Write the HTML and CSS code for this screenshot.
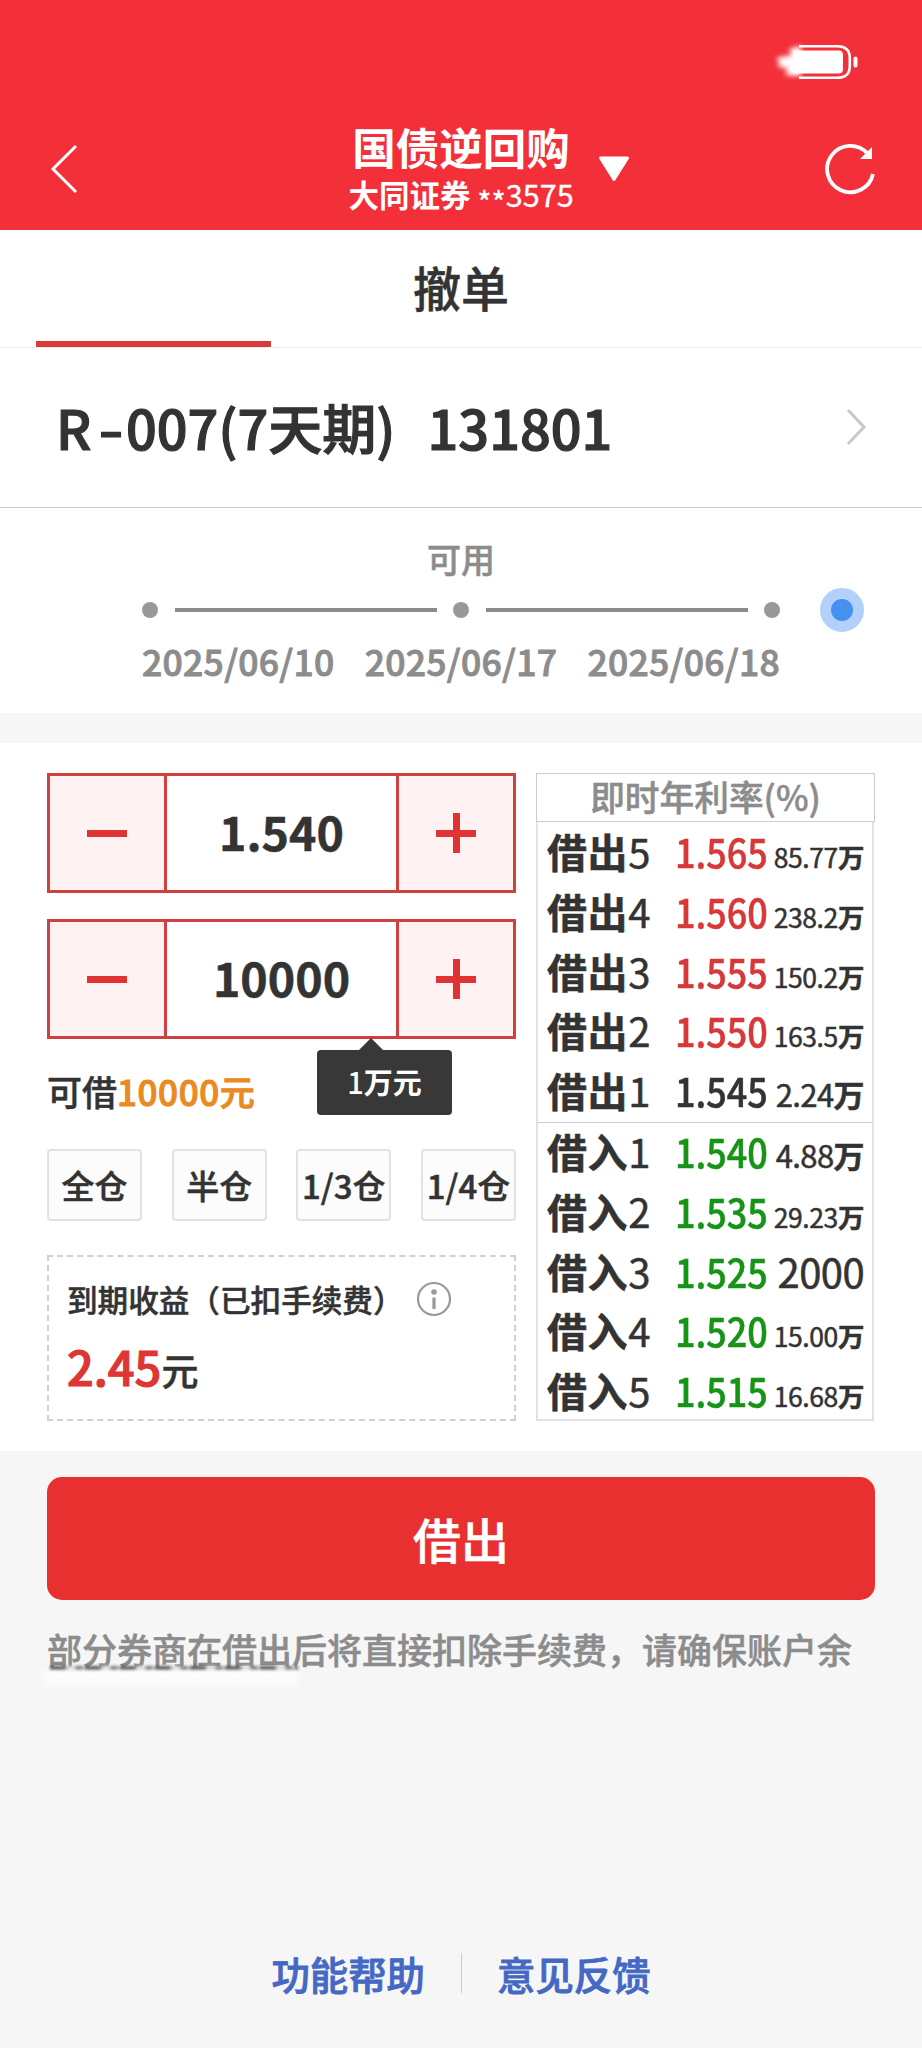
FILE: index.html
```html
<!DOCTYPE html>
<html lang="zh-CN">
<head>
    <meta charset="UTF-8">
    <meta name="viewport" content="width=device-width, initial-scale=1.0">
    <title>国债逆回购</title>
    <link rel="stylesheet" href="styles.css">
</head>
<body>

    <header class="header">
        <div class="status-bar">
            <svg class="battery" width="96" height="40" viewBox="0 0 96 40">
                <defs>
                    <filter id="soft" x="-40%" y="-40%" width="180%" height="180%"><feGaussianBlur stdDeviation="2.5"/></filter>
                </defs>
                <path d="M38 5 L26 8 L29 14 L13 17 L17 22 L14 25 L25 28 L22 34 L38 35 Z" fill="#fff" filter="url(#soft)"/>
                <path d="M36 5.200 H74 Q86.800 5.200 86.800 17 V25 Q86.800 36.800 74 36.800 H36" fill="none" stroke="#fff" stroke-width="2.600"/>
                <path d="M30 9.500 H76 Q80 9.500 80 14 V28 Q80 32.500 76 32.500 H30 Z" fill="#fff"/>
                <rect x="90.500" y="15.500" width="4" height="11" rx="2" fill="#fff"/>
            </svg>
        </div>
        <div class="nav">
            <svg class="back" width="30" height="50" viewBox="0 0 30 50">
                <path d="M27 2 L4 25 L27 48" fill="none" stroke="#fff" stroke-width="3"/>
            </svg>
            <div class="nav-title">
                <h1>国债逆回购</h1>
                <p>大同证券 <span class="account"><sub>**</sub>3575</span></p>
            </div>
            <svg class="dropdown" width="32" height="26" viewBox="0 0 32 26">
                <path d="M2.500 2 H29.500 L16 23.500 Z" fill="#fff" stroke="#fff" stroke-width="3" stroke-linejoin="round"/>
            </svg>
            <svg class="refresh" width="54" height="54" viewBox="0 0 54 54">
                <path d="M50 32 A23.200 23.200 0 1 1 44.500 11.500" fill="none" stroke="#fff" stroke-width="3.800"/>
                <path d="M49 5 V17 H37 Z" fill="#fff"/>
            </svg>
        </div>
    </header>

    <div class="tabs">
        <div class="tab active"></div>
        <div class="tab">撤单</div>
        <div class="tab"></div>
    </div>

    <div class="product">
        <div class="product-name"><span class="letter">R</span><span class="dash">-</span><span>007(7天期)</span><span class="code">131801</span></div>
        <svg width="22" height="38" viewBox="0 0 22 38">
            <path d="M2 2 L18 19 L2 36" fill="none" stroke="#c8c8c8" stroke-width="3"/>
        </svg>
    </div>

    <div class="timeline">
        <div class="timeline-label">可用</div>
        <div class="timeline-track">
            <i class="dot"></i><i class="line"></i><i class="dot"></i><i class="line"></i><i class="dot"></i>
            <i class="service"></i>
        </div>
        <div class="timeline-dates">
            <span>2025/06/10</span>
            <span>2025/06/17</span>
            <span>2025/06/18</span>
        </div>
    </div>

    <div class="trade">
        <div class="trade-form">
            <div class="stepper">
                <button type="button"><i class="minus"></i></button>
                <div class="stepper-value">1.540</div>
                <button type="button"><i class="plus"></i></button>
            </div>
            <div class="stepper">
                <button type="button"><i class="minus"></i></button>
                <div class="stepper-value">10000</div>
                <button type="button"><i class="plus"></i></button>
                <div class="tooltip"><span>1</span>万元</div>
            </div>
            <div class="available">可借<span>10000元</span></div>
            <div class="positions">
                <button type="button">全仓</button>
                <button type="button">半仓</button>
                <button type="button">1/3仓</button>
                <button type="button">1/4仓</button>
            </div>
            <div class="income">
                <div class="income-title">
                    <span>到期收益（已扣手续费）</span>
                    <svg width="36" height="36" viewBox="0 0 36 36">
                        <circle cx="18" cy="18" r="16" fill="none" stroke="#999" stroke-width="2.200"/>
                        <circle cx="18" cy="11" r="2.800" fill="#999"/>
                        <rect x="16.400" y="16.500" width="3.200" height="11.500" fill="#999"/>
                    </svg>
                </div>
                <div class="income-value"><span>2.45</span>元</div>
            </div>
        </div>

        <div class="quotes">
            <div class="quotes-title">即时年利率(%)</div>
            <div class="quotes-body">
                <!-- 借出 -->
                <div class="quotes-group">
                    <div class="quote"><b>借出</b><em>5</em><span class="rate up">1.565</span><span class="vol small">85.77<b>万</b></span></div>
                    <div class="quote"><b>借出</b><em>4</em><span class="rate up">1.560</span><span class="vol small">238.2<b>万</b></span></div>
                    <div class="quote"><b>借出</b><em>3</em><span class="rate up">1.555</span><span class="vol small">150.2<b>万</b></span></div>
                    <div class="quote"><b>借出</b><em>2</em><span class="rate up">1.550</span><span class="vol small">163.5<b>万</b></span></div>
                    <div class="quote"><b>借出</b><em>1</em><span class="rate">1.545</span><span class="vol medium">2.24<b>万</b></span></div>
                </div>
                <!-- 借入 -->
                <div class="quotes-group">
                    <div class="quote"><b>借入</b><em>1</em><span class="rate down">1.540</span><span class="vol medium">4.88<b>万</b></span></div>
                    <div class="quote"><b>借入</b><em>2</em><span class="rate down">1.535</span><span class="vol small">29.23<b>万</b></span></div>
                    <div class="quote"><b>借入</b><em>3</em><span class="rate down">1.525</span><span class="vol">2000</span></div>
                    <div class="quote"><b>借入</b><em>4</em><span class="rate down">1.520</span><span class="vol small">15.00<b>万</b></span></div>
                    <div class="quote"><b>借入</b><em>5</em><span class="rate down">1.515</span><span class="vol small">16.68<b>万</b></span></div>
                </div>
            </div>
        </div>
    </div>

    <button type="button" class="submit">借出</button>
    <p class="notice">部分券商在借出后将直接扣除手续费，请确保账户余</p>

    <footer class="footer">
        <a>功能帮助</a>
        <a>意见反馈</a>
    </footer>

</body>
</html>
```
FILE: styles.css
```css
* {
    box-sizing: border-box;
    margin: 0;
    padding: 0;
}
body {
    width: 922px;
    height: 2048px;
    display: flex;
    flex-direction: column;
    background: #f6f6f6;
    color: #333;
    font-family: "Noto Sans CJK SC", sans-serif;
    font-weight: 500;
    line-height: 1;
    white-space: nowrap;
    overflow: hidden;
    -webkit-text-stroke: 0.5px currentColor;
}
button {
    font: inherit;
    color: inherit;
}
svg, i {
    display: block;
    flex: none;
}

/* header */
.header {
    height: 230px;
    background: #f32f39;
    color: #fff;
}
.status-bar {
    height: 123px;
    padding: 41px 63px 0 0;
    display: flex;
    justify-content: flex-end;
}
.nav {
    height: 92px;
    display: flex;
    align-items: center;
    padding: 0 45px 0 49px;
}
.nav-title {
    width: 230px;
    margin-left: 267px;
    padding-top: 3px;
    text-align: center;
}
.nav-title h1 {
    font-size: 43.500px;
    line-height: 48px;
    -webkit-text-stroke: 0;
}
.nav-title p {
    font-size: 30.500px;
    font-weight: 700;
    line-height: 47px;
    -webkit-text-stroke: 0;
}
.account {
    font-weight: 400;
    -webkit-text-stroke: 0.4px currentColor;
}
.account sub {
    font-size: inherit;
    line-height: 0;
    vertical-align: -7px;
}
.dropdown {
    margin-left: 22px;
}
.refresh {
    margin-left: auto;
}

/* tabs */
.tabs {
    height: 118px;
    display: flex;
    justify-content: space-between;
    padding: 0 36px;
    background: #fff;
    border-bottom: 1px solid #eee;
}
.tab {
    width: 235px;
    font-size: 48px;
    line-height: 113px;
    text-align: center;
}
.tab.active {
    border-bottom: 6px solid #d93a3a;
}

.product {
    height: 160px;
    display: flex;
    align-items: center;
    justify-content: space-between;
    padding: 0 54px 2px 56px;
    background: #fff;
    border-bottom: 1px solid #ccc;
}
.product-name {
    display: flex;
    font-size: 54px;
    -webkit-text-stroke: 1.200px currentColor;
}
.letter {
    width: 46px;
}
.dash {
    width: 24px;
    transform: scaleX(1.3);
}
.code {
    margin-left: 32px;
}

/* timeline */
.timeline {
    height: 205px;
    background: #fff;
    color: #8c8c8c;
}
.timeline-label {
    padding-top: 33px;
    font-size: 34px;
    line-height: 35px;
    text-align: center;
}
.timeline-track {
    display: flex;
    align-items: center;
    justify-content: space-between;
    height: 44px;
    margin-top: 12px;
    padding: 0 58px 0 142px;
}
.dot {
    width: 16px;
    height: 16px;
    border-radius: 50%;
    background: #999;
}
.line {
    width: 262px;
    height: 4px;
    background: #8c8c8c;
}
.service {
    width: 44px;
    height: 44px;
    margin-left: 23px;
    border: 11px solid #b2d0fa;
    border-radius: 50%;
    background: #4491ef;
}
.timeline-dates {
    display: flex;
    justify-content: space-between;
    padding: 9px 142px 0;
    font-size: 35.500px;
    line-height: 40px;
    letter-spacing: 0.300px;
    -webkit-text-stroke: 0.9px currentColor;
}

/* trade */
.trade {
    height: 708px;
    margin-top: 30px;
    padding: 30px 47px 0;
    display: flex;
    justify-content: space-between;
    background: #fff;
}
.trade-form {
    width: 469px;
}
.stepper {
    position: relative;
    height: 120px;
    margin-bottom: 26px;
    display: flex;
    border: 3px solid #cf4041;
}
.stepper button {
    width: 114px;
    display: flex;
    align-items: center;
    justify-content: center;
    border: none;
    background: #fef3f2;
}
.stepper-value {
    flex: 1;
    border: solid #cf4041;
    border-width: 0 3px;
    font-size: 46.500px;
    font-weight: 700;
    line-height: 110px;
    text-align: center;
}
.minus, .plus {
    width: 40px;
    height: 7px;
    background: #e03434;
}
.plus {
    height: 40px;
    background: linear-gradient(#e03434, #e03434) center / 7px 40px no-repeat,
                linear-gradient(#e03434, #e03434) center / 40px 7px no-repeat;
}
.tooltip {
    position: absolute;
    left: 267px;
    top: 128px;
    width: 135px;
    height: 65px;
    border-radius: 4px;
    background: #383838;
    color: #fff;
    font-size: 29px;
    font-weight: 700;
    line-height: 63px;
    text-align: center;
    -webkit-text-stroke: 0;
}
.tooltip span {
    font-weight: 500;
}
.tooltip::before {
    content: "";
    position: absolute;
    left: 41px;
    top: -12px;
    border: solid transparent;
    border-width: 0 13px 13px;
    border-bottom-color: #383838;
}
.available {
    height: 84px;
    padding-top: 6px;
    font-size: 35px;
    line-height: 40px;
}
.available span {
    color: #ea8a21;
    letter-spacing: 0.600px;
    -webkit-text-stroke: 1px currentColor;
}
.positions {
    display: flex;
    justify-content: space-between;
}
.positions button {
    width: 95px;
    height: 72px;
    border: 2px solid #e2e2e2;
    border-radius: 4px;
    background: #fcfcfc;
    font-size: 33px;
    text-align: center;
}
.income {
    height: 166px;
    margin-top: 34px;
    padding: 24px 18px 0;
    border: 2px dashed #d0d0d0;
}
.income-title {
    display: flex;
    align-items: center;
    font-size: 30.600px;
}
.income-title svg {
    margin-left: 12px;
}
.income-value {
    margin-top: 22px;
    font-size: 37px;
    line-height: 54px;
}
.income-value span {
    color: #de3535;
    font-size: 47px;
    -webkit-text-stroke: 1.200px currentColor;
}

/* quotes */
.quotes {
    width: 339px;
}
.quotes-title {
    height: 49px;
    border: 1px solid #ccc;
    color: #8c8c8c;
    font-size: 34.700px;
    line-height: 44px;
    text-align: center;
}
.quotes-body {
    width: 338px;
    border: 2px solid #e2e2e2;
    border-top: none;
}
.quotes-group {
    height: 300px;
}
.quotes-group + .quotes-group {
    height: 297px;
    border-top: 1px solid #ccc;
}
.quote {
    height: 59.800px;
    padding: 0 8px 0 9px;
    display: flex;
    align-items: baseline;
    font-size: 40px;
    line-height: 58px;
}
.quotes-group + .quotes-group .quote {
    line-height: 56px;
}
.quote > b {
    letter-spacing: 0.600px;
}
.quote em {
    width: 22px;
    font-style: normal;
    font-weight: 400;
}
.rate {
    width: 90px;
    margin-left: 25px;
    transform: scaleX(0.9);
    transform-origin: left;
}
.rate.up {
    color: #d83838;
}
.rate.down {
    color: #159415;
}
.vol {
    margin-left: auto;
    font-weight: 400;
    letter-spacing: -0.600px;
}
.vol.small {
    font-size: 26.500px;
    letter-spacing: -0.400px;
}
.vol.medium {
    font-size: 31px;
}

.submit {
    width: 828px;
    height: 123px;
    margin: 26px auto 0;
    border: none;
    border-radius: 15px;
    background: #e83030;
    color: #fff;
    font-size: 48px;
    line-height: 119px;
}
.notice {
    position: relative;
    margin-top: 29px;
    padding-left: 47px;
    color: #8c8c8c;
    font-size: 35px;
    line-height: 40px;
}
/* faded second line */
.notice::before {
    content: "";
    position: absolute;
    left: 50px;
    top: 37px;
    width: 248px;
    height: 4px;
    background: repeating-linear-gradient(90deg, #555 0 14px, #ddd 18px 24px, #777 27px 31px, #e8e8e8 35px);
    filter: blur(1.5px);
}
.notice::after {
    content: "";
    position: absolute;
    left: 42px;
    top: 42px;
    width: 256px;
    height: 24px;
    background: linear-gradient(rgba(255, 255, 255, 0.8), rgba(255, 255, 255, 0));
    filter: blur(2px);
}

.footer {
    display: flex;
    justify-content: center;
    margin-top: 284px;
}
.footer a {
    padding: 0 36px;
    color: #4468c4;
    font-size: 38.400px;
    line-height: 40px;
    -webkit-text-stroke: 0.8px currentColor;
}
.footer a + a {
    padding-left: 35px;
    border-left: 1px solid #ccc;
}
```
